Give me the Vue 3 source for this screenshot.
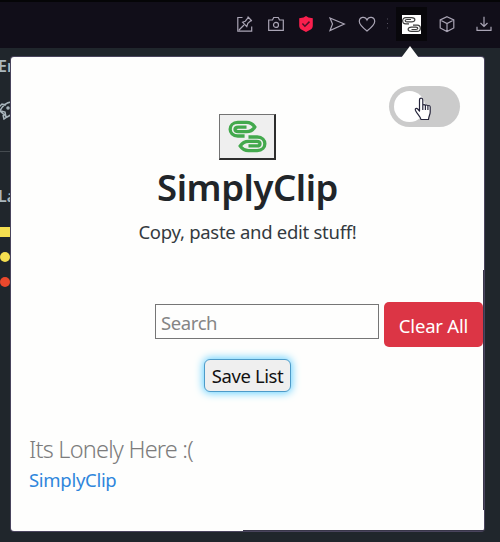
<script setup>
import { ref } from 'vue'

const search = ref('')
</script>

<template>
  <div class="browser">
    <header class="toolbar">
      <svg class="icon" viewBox="0 0 16 16"><path d="M5.500 1.500H.8v13.700h13.900v-4.700M2 14l5-5M5.500 6.200l4.300 4.400 1-3.200 3.200-2.900.8.500-4-4.300.3 1-2.800 3.500z" /></svg>
      <svg class="icon" viewBox="0 0 16 16"><path d="M.7 4h3.800l1.200-2.500h4.600L11.500 4h3.800v10.300H.7z" /><circle cx="8" cy="8.900" r="2.500" /></svg>
      <svg class="icon shield" viewBox="0 0 16 16"><path class="badge" d="M8 0l2.500 1.500 4.300.8v7.200c0 2.400-1 3.700-3 4.600L8 16l-3.800-1.900c-2-.9-3-2.200-3-4.600V2.300l4.300-.8z" /><path class="check" d="M4.400 7.600l2.500 2.600 4.600-4.600" /></svg>
      <svg class="icon" viewBox="0 0 16 16"><path d="M1 2l14.300 6L1 14.600 3.500 8z" /></svg>
      <svg class="icon" viewBox="0 0 16 16"><path d="M8 15C5.500 13 .3 9 .3 5.500c0-5 6-5.600 7.700-1.500 1.700-4.100 7.700-3.500 7.700 1.500C15.700 9 10.500 13 8 15z" /></svg>
      <svg class="dots" viewBox="0 0 3 12"><path d="M1 1h1M1 5.500h1M1 10h1" /></svg>
      <div class="tile">
        <svg class="clips" viewBox="0 0 19 19">
          <path d="M7 8.900H3.800c-4.200 0-4.200-6.200 0-6.200h5.700c4.500 0 4.500 4.200 0 4.200H5c-2.400 0-2.400-2.400 0-2.400h4" />
          <path d="M11 10.100h4.200c4.200 0 4.200 6.300 0 6.300H9.500c-4.500 0-4.500-4.300 0-4.300H14c2.400 0 2.400 2.400 0 2.400H9.500" />
        </svg>
      </div>
      <svg class="icon cube" viewBox="0 0 16 16"><path d="M8 .7l6.800 3.300v8L8 15.500 1.200 12V4zM1.200 4L8 7.500 14.800 4M8 7.500v8" /></svg>
      <svg class="icon download" viewBox="0 0 16 16"><path d="M8 .7v9.600M4.500 7L8 10.500 11.500 7M1 10.800v3.500h14v-3.500" /></svg>
    </header>

    <aside class="page">
      <div class="heading first">En</div>
      <svg class="rocket" viewBox="0 0 20 20"><path d="M2 11C5 4 10 1 18 2c1 7-3 12-9 15zM2 10l-3-1 5-5 4 1M8 17l-1-5-4-1M9 17l-3 2-1-4" /><circle cx="10" cy="8" r="1" /></svg>
      <div class="rule"></div>
      <div class="heading">La</div>
      <div class="bar"></div>
      <div class="dot"></div>
      <div class="dot red"></div>
    </aside>

    <main class="popup">
      <div class="toggle-row">
        <div class="toggle"><div class="knob"></div></div>
        <svg class="pointer" viewBox="0 0 18 24"><path d="M5.500 14V3c0-2.600 3.300-2.600 3.300 0v6c0-2 2.600-1.800 2.600.2 0-1.800 2.500-1.500 2.500.3 0-1.500 2.300-1.300 2.300.5v5c0 3-1.500 4-1.700 7.500H7C6.500 19.500 3.500 17.500 1.500 13.500c-.8-1.800.8-2.800 2.200-1.500zM8.800 9v4M11.400 9.500V13M13.900 10v3" /></svg>
      </div>
      <div class="brand">
        <div class="logo">
          <svg viewBox="0 0 40 34">
            <path d="M17 16.500H10C-.5 16.500-.5 2.500 10 2.500h9c4.500 0 7 2.500 8.500 4.700-1.500 2.300-4 4.800-8.500 4.800h-8.500c-4.500 0-4.500-4.700 0-4.700H19" />
            <path d="M21 17.500h9c10.500 0 10.500 14 0 14h-9c-4.500 0-7-2.500-8.500-4.700 1.500-2.300 4-4.800 8.500-4.800h8.500c4.500 0 4.500 4.700 0 4.700H21" />
          </svg>
        </div>
        <h1>SimplyClip</h1>
        <p>Copy, paste and edit stuff!</p>
      </div>
      <div class="search-row">
        <input v-model="search" type="text" placeholder="Search" />
        <button class="clear">Clear All</button>
      </div>
      <div class="save-row"><button class="save">Save List</button></div>
      <div class="empty">Its Lonely Here :(</div>
      <a class="link">SimplyClip</a>
    </main>
  </div>
</template>

<style>
body { background: #20262c; overflow: hidden; }
</style>

<style scoped>
* { box-sizing: border-box; }
.browser { position: relative; width: 500px; height: 542px; overflow: hidden; background: #20262c; font-family: "Noto Sans", "Open Sans", sans-serif; }
.toolbar { display: flex; align-items: center; height: 48px; padding: 0 0 2px 237px; background: #110e19; border-top: 2px solid #050507; }
.toolbar svg { flex: none; fill: none; stroke: #aaa5b5; stroke-width: 1.2; overflow: visible; }
.icon { width: 16px; height: 16px; }
.icon + .icon { margin-left: 14.500px; }
.toolbar .badge { fill: #f91f4d; stroke: none; }
.toolbar .check { stroke: #4e1029; stroke-width: 1.500; }
.toolbar .dots { width: 3px; height: 12px; margin: 0 7px 0 11px; stroke: #55505f; }
.tile { display: flex; align-items: center; justify-content: center; width: 31px; height: 34px; background: #08070b; }
.toolbar .clips { width: 19px; height: 19px; background: #fff; stroke: #3d3d3d; stroke-width: 1.2; }
.cube { margin-left: 12px; }
.toolbar .download { margin-left: 21px; }

.page { width: 11px; overflow: hidden; color: #a9b6bd; }
.heading { height: 24px; margin-left: -2px; font-size: 16px; font-weight: 600; line-height: 24px; white-space: nowrap; }
.heading.first { margin-top: 6px; }
.rocket { display: block; width: 20px; height: 20px; margin: 22px 0 31px -2px; fill: none; stroke: #a9b6bd; stroke-width: 1.500; }
.rule { height: 1px; margin-bottom: 32px; background: #454b50; }
.bar { height: 10px; margin-top: 19px; background: #f5df50; }
.dot { width: 10px; height: 10px; margin-top: 15px; border-radius: 50%; background: #f5df50; }
.dot.red { background: #ea482c; }

.popup { position: absolute; left: 11px; top: 57px; width: 473px; height: 474px; background: linear-gradient(#39364a, #39364a) 100% 213px / 1px 240px no-repeat #fefefd; border-radius: 3px; box-shadow: 0 0 0 1px #49445d; }
.popup::before { content: ""; position: absolute; left: 390px; top: -11px; width: 18px; height: 12px; background: #fefefd; clip-path: polygon(50% 0, 100% 100%, 0 100%); }
.popup::after { content: ""; position: absolute; left: 232px; right: 0; bottom: 0; height: 1px; background: #39364a; }
.toggle-row { position: relative; display: flex; justify-content: flex-end; padding: 29px 24px 0 0; }
.toggle { width: 71px; height: 41px; padding: 5px; border-radius: 21px; background: #cbcbcb; }
.knob { width: 31px; height: 31px; border-radius: 50%; background: #fff; }
.pointer { position: absolute; left: 403px; top: 40px; width: 18px; height: 24px; fill: #fff; stroke: #25243a; stroke-width: 1.200; stroke-linejoin: round; }
.brand { display: flex; flex-direction: column; align-items: center; }
.logo { display: flex; align-items: center; justify-content: center; width: 57px; height: 46px; margin-top: -13px; border: 1px solid #737373; border-right: 2px solid #2d2d2d; border-bottom: 2px solid #2d2d2d; background: #efefef; }
.logo svg { width: 39px; height: 33px; fill: none; stroke: #43a94d; stroke-width: 3.400; }
h1 { height: 46px; margin: 4px 0 0; color: #212529; font-size: 36.500px; font-weight: 600; line-height: 46px; white-space: nowrap; letter-spacing: -.45px; }
p { height: 28px; margin: 8px 0 0; color: #343a40; font-size: 18.500px; line-height: 28px; white-space: nowrap; letter-spacing: -.28px; }
.search-row { display: flex; justify-content: flex-end; align-items: flex-start; padding-right: 1px; margin-top: 56px; }
input { width: 224px; height: 35px; margin: 2px 5px 0 0; padding: 3px 4px 1px 5px; border: 1px solid #767676; outline: 0; background: #fefefd; color: #212529; font: 18.500px "Noto Sans", sans-serif; letter-spacing: -.4px; }
input::placeholder { color: #858585; opacity: 1; }
.clear { width: 99px; height: 45px; padding: 2px 0 0; border: 0; border-radius: 5px; background: #dc3545; color: #fff; font: 18.500px "Noto Sans", sans-serif; letter-spacing: -.2px; }
.save-row { padding-left: 193px; margin-top: 12px; line-height: 0; }
.save { width: 87px; height: 33px; padding: 0; border: 1px solid #4c9bc9; border-radius: 6px; background: #efefef; color: #111; box-shadow: 0 0 9px 1px #60cfff; font: 18.500px "Noto Sans", sans-serif; letter-spacing: -.4px; }
.empty { height: 34px; margin: 40px 0 0 18px; color: #7c7c7c; font-size: 23.500px; font-weight: 300; line-height: 34px; white-space: nowrap; letter-spacing: -.78px; }
.link { display: block; height: 28px; margin-left: 18px; color: #2f86dc; font-size: 18.500px; line-height: 28px; letter-spacing: -.3px; }
</style>
